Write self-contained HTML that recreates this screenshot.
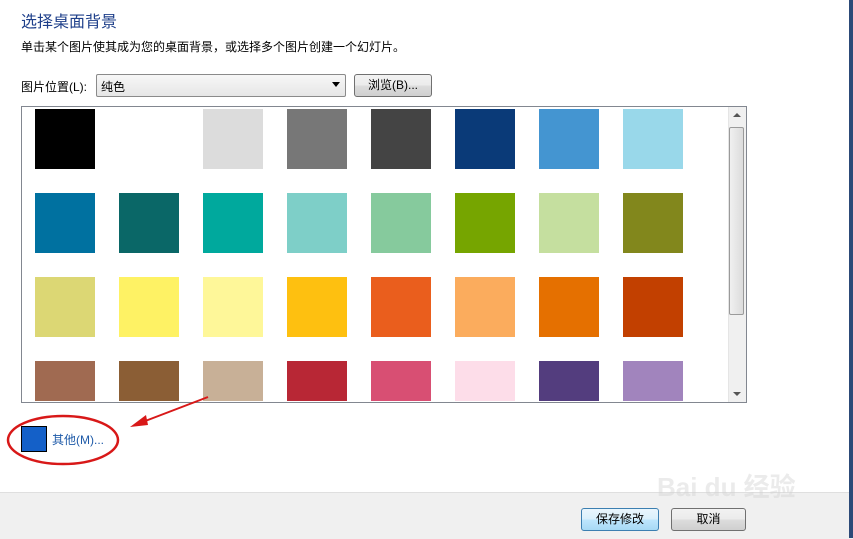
<!DOCTYPE html>
<html><head><meta charset="utf-8"><style>
body{margin:0;width:853px;height:538px;background:#fff;position:relative;overflow:hidden;font-family:"Liberation Sans","Noto Sans CJK SC",sans-serif;}
.a{position:absolute}
.sw{position:absolute;width:60px;height:60px}
.btn{position:absolute;border:1px solid #707070;border-radius:3px;background:linear-gradient(#f2f2f2,#ebebeb 50%,#dddddd 51%,#cfcfcf);font-size:12px;text-align:center;color:#000;box-sizing:border-box}
</style></head><body>
<div class="a" style="left:21px;top:8px;font-size:16px;color:#1e3f8a">选择桌面背景</div>
<div class="a" style="left:21px;top:38px;font-size:12px;color:#000">单击某个图片使其成为您的桌面背景，或选择多个图片创建一个幻灯片。</div>
<div class="a" style="left:21px;top:78px;font-size:12px">图片位置(L):</div>
<div class="a" style="left:96px;top:74px;width:250px;height:23px;border:1px solid #8a8a8a;border-radius:2px;box-sizing:border-box;background:linear-gradient(#f7f7f7,#e6e6e6);font-size:12px;padding:3px 0 0 4px">纯色<span style="position:absolute;right:5px;top:7px;border:4px solid transparent;border-top:5px solid #000"></span></div>
<div class="btn" style="left:354px;top:74px;width:78px;height:23px;line-height:21px">浏览(B)...</div>
<div class="a" style="left:21px;top:106px;width:726px;height:297px;border:1px solid #828790;box-sizing:border-box;overflow:hidden">
<div class="a" style="right:0;top:0;width:17px;height:295px;background:#f0f0f0;border-left:1px solid #e5e5e5"></div>
<div class="a" style="right:2px;top:20px;width:13px;height:186px;border:1px solid #9a9a9a;border-radius:2px;background:linear-gradient(90deg,#f0f0f0,#dcdcdc)"></div>
<div class="a" style="right:5px;top:6px;border:4px solid transparent;border-bottom:4px solid #555;border-top:0"></div>
<div class="a" style="right:5px;bottom:6px;border:4px solid transparent;border-top:4px solid #555;border-bottom:0"></div>
</div>
<div id="g"></div>
<script>
var c=[["#000","#fff","#dcdcdc","#777","#444","#0a3a78","#4495d1","#99d8ea"],
["#0071a0","#0a6767","#00a99d","#7ecfc8","#86ca9d","#76a500","#c5df9f","#82871c"],
["#dcd774","#fef264","#fef799","#fec010","#ea5e1d","#fbac5d","#e57000","#c24000"],
["#a06a51","#8b5e35","#c8b097","#b82735","#d84f73","#fddde9","#533d7e","#a184bd"]];
var h="";for(var r=0;r<4;r++)for(var i=0;i<8;i++){var y=109+r*84;var hh=r==3?40:60;h+='<div class="sw" style="left:'+(35+i*84)+'px;top:'+y+'px;height:'+hh+'px;background:'+c[r][i]+'"></div>';}
document.getElementById('g').innerHTML=h;
</script>
<div class="a" style="left:21px;top:426px;width:24px;height:24px;background:#1460c8;border:1px solid #000"></div>
<div class="a" style="left:52px;top:431px;font-size:12px;color:#1e5aa8">其他(M)...</div>
<svg class="a" style="left:0;top:385px" width="260" height="85"><ellipse cx="63" cy="55" rx="55" ry="24" fill="none" stroke="#d81818" stroke-width="2.5"/><line x1="208" y1="12" x2="140" y2="38" stroke="#d81818" stroke-width="2"/><polygon points="130,42 146,30 148,40" fill="#d81818"/></svg>
<div class="a" style="left:0;top:492px;width:853px;height:46px;background:#f0f0f0;border-top:1px solid #dfdfdf"></div>
<div class="btn" style="left:581px;top:508px;width:78px;height:23px;line-height:21px;border-color:#3c7fb1;background:linear-gradient(#eaf6fd,#d9f0fc 50%,#bee6fd 51%,#a7d9f5)">保存修改</div>
<div class="btn" style="left:671px;top:508px;width:75px;height:23px;line-height:21px">取消</div>
<div class="a" style="left:849px;top:0;width:4px;height:538px;background:#2c4a78"></div>
<div class="a" style="left:657px;top:467px;font-size:26px;color:rgba(210,210,210,0.45);font-weight:bold">Bai du 经验</div>
</body></html>
